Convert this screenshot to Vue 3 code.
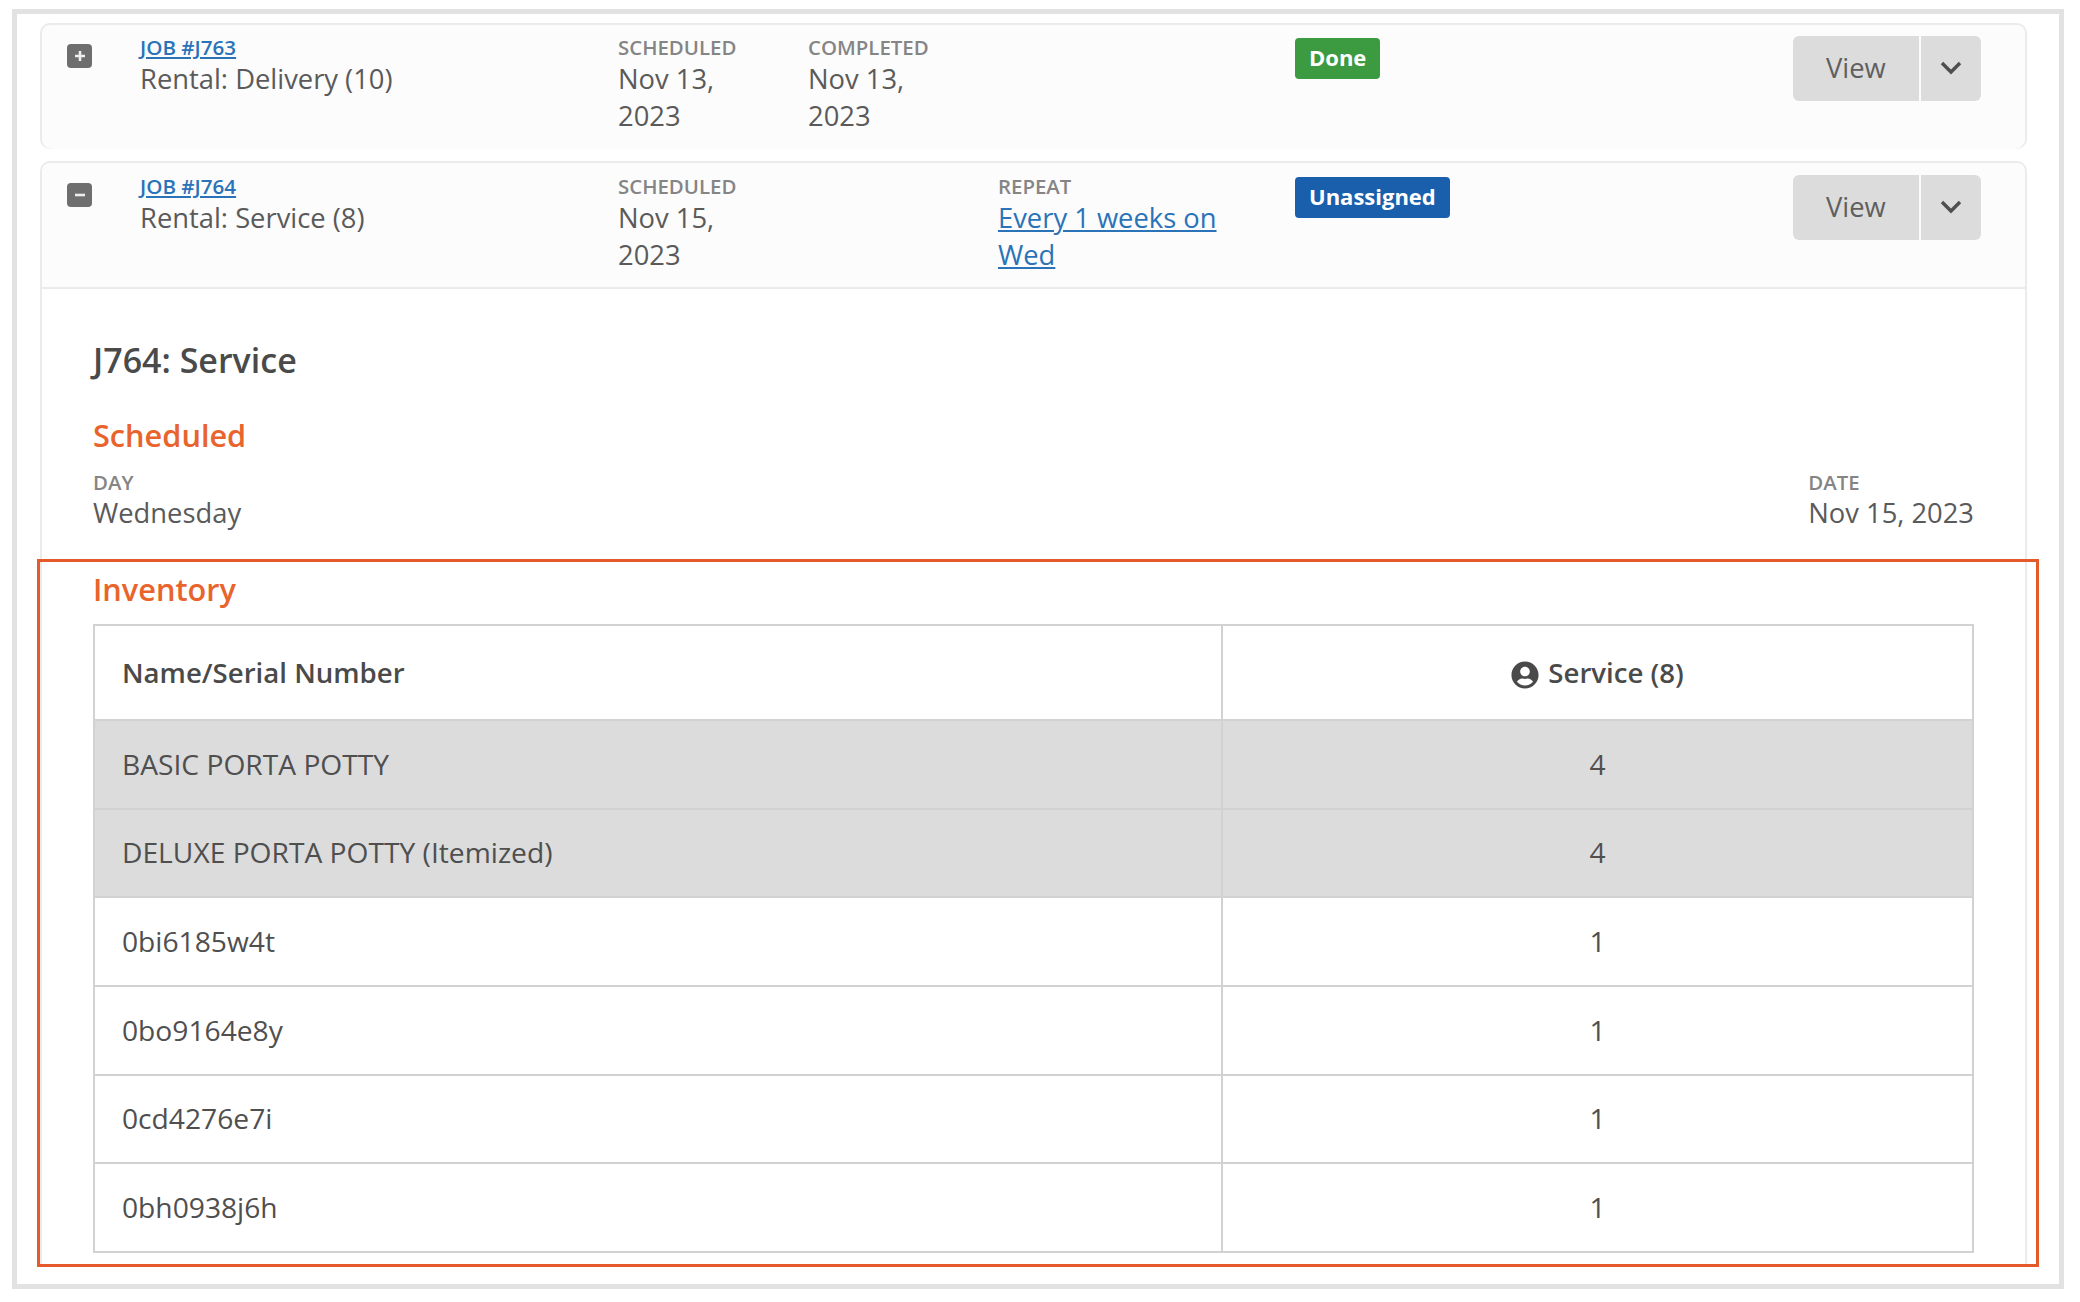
<template>
    <div class="frame">
        <div class="job-card">
            <div class="job-head">
                <button class="toggle">
                    <svg viewBox="0 0 24 24" width="24" height="24"><path d="M12 7v10M7 12h10" /></svg>
                </button>
                <div class="job-name">
                    <a class="job-link" href="#">JOB #J763</a>
                    <div class="value">Rental: Delivery (10)</div>
                </div>
                <div class="meta">
                    <div class="label">SCHEDULED</div>
                    <div class="value">Nov 13, 2023</div>
                </div>
                <div class="meta">
                    <div class="label">COMPLETED</div>
                    <div class="value">Nov 13, 2023</div>
                </div>
                <div class="meta"></div>
                <div><span class="badge done">Done</span></div>
                <div class="btn-group">
                    <button class="view-btn">View</button>
                    <button class="caret-btn">
                        <svg viewBox="0 0 24 16" width="24" height="16"><path d="M3 3l9 9 9-9" /></svg>
                    </button>
                </div>
            </div>
        </div>

        <div class="job-card open">
            <div class="job-head">
                <button class="toggle">
                    <svg viewBox="0 0 24 24" width="24" height="24"><path d="M7 12h10" /></svg>
                </button>
                <div class="job-name">
                    <a class="job-link" href="#">JOB #J764</a>
                    <div class="value">Rental: Service (8)</div>
                </div>
                <div class="meta">
                    <div class="label">SCHEDULED</div>
                    <div class="value">Nov 15, 2023</div>
                </div>
                <div class="meta"></div>
                <div class="meta">
                    <div class="label">REPEAT</div>
                    <a class="value repeat" href="#">Every 1 weeks on Wed</a>
                </div>
                <div><span class="badge unassigned">Unassigned</span></div>
                <div class="btn-group">
                    <button class="view-btn">View</button>
                    <button class="caret-btn">
                        <svg viewBox="0 0 24 16" width="24" height="16"><path d="M3 3l9 9 9-9" /></svg>
                    </button>
                </div>
            </div>

            <div class="job-body">
                <h2>J764: Service</h2>
                <h3 class="scheduled-title">Scheduled</h3>
                <div class="day-row">
                    <div>
                        <div class="label">DAY</div>
                        <div class="value">Wednesday</div>
                    </div>
                    <div>
                        <div class="label">DATE</div>
                        <div class="value">Nov 15, 2023</div>
                    </div>
                </div>

                <section class="inventory">
                    <h3>Inventory</h3>
                    <table>
                        <thead>
                            <tr>
                                <th class="name-col">Name/Serial Number</th>
                                <th>
                                    <svg class="user-icon" viewBox="0 0 512 512" width="28" height="28"><path d="M256 8C119 8 8 119 8 256s111 248 248 248 248-111 248-248S393 8 256 8zm0 96c48.6 0 88 39.4 88 88s-39.4 88-88 88-88-39.4-88-88 39.4-88 88-88zm0 344c-58.7 0-111.3-26.6-146.5-68.2 18.8-35.4 55.6-59.8 98.5-59.8 2.4 0 4.8.4 7.1 1.1 13 4.2 26.6 6.9 40.9 6.9 14.3 0 28-2.7 40.9-6.9 2.3-.7 4.7-1.1 7.1-1.1 42.9 0 79.7 24.4 98.5 59.8C367.3 421.4 314.7 448 256 448z" /></svg>
                                    Service (8)
                                </th>
                            </tr>
                        </thead>
                        <tbody>
                            <tr v-for="row in rows" :key="row.name" :class="{ group: row.group }">
                                <td class="name-col">{{ row.name }}</td>
                                <td>{{ row.qty }}</td>
                            </tr>
                        </tbody>
                    </table>
                </section>
            </div>
        </div>
    </div>
</template>

<script setup>
const rows = [
    { name: 'BASIC PORTA POTTY', qty: 4, group: true },
    { name: 'DELUXE PORTA POTTY (Itemized)', qty: 4, group: true },
    { name: '0bi6185w4t', qty: 1 },
    { name: '0bo9164e8y', qty: 1 },
    { name: '0cd4276e7i', qty: 1 },
    { name: '0bh0938j6h', qty: 1 }
]
</script>

<style>
body {
    background: #fff;
}
</style>

<style scoped>
.frame {
    box-sizing: border-box;
    width: 2052px;
    height: 1280px;
    margin: 9px 0 0 12px;
    padding: 9px 32px 0 23px;
    border: 5px solid #e2e2e2;
    overflow: hidden;
    background: #fff;
    font-family: "Open Sans", sans-serif;
    color: #555;
}

.job-card {
    box-sizing: border-box;
    height: 126px;
    margin-bottom: 12px;
    border: 2px solid #ebebeb;
    border-radius: 10px;
    background: #fcfcfc;
}

.job-card.open {
    height: auto;
    margin-bottom: 0;
    border-bottom: none;
    border-radius: 10px 10px 0 0;
    background: #fff;
}

.job-head {
    display: grid;
    grid-template-columns: 73px 478px 190px 190px 297px 498px 188px;
    box-sizing: border-box;
    height: 124px;
    padding: 10px 0 0 25px;
    background: #fcfcfc;
    border-radius: 10px;
}

.open .job-head {
    height: 126px;
    padding-top: 11px;
    border-bottom: 2px solid #ebebeb;
    border-radius: 10px 10px 0 0;
}

.toggle {
    width: 25px;
    height: 24px;
    margin-top: 9px;
    padding: 0;
    border: none;
    border-radius: 4px;
    background: #6e6e6e;
}

.toggle svg {
    display: block;
    margin: auto;
}

.toggle path {
    fill: none;
    stroke: #eee;
    stroke-width: 2.6;
}

.job-link {
    display: block;
    font-size: 20.6px;
    font-weight: 600;
    line-height: 25px;
    color: #2a73b8;
}

.label {
    font-size: 20.4px;
    font-weight: 600;
    line-height: 25px;
    color: #858585;
}

.value {
    font-size: 27.35px;
    line-height: 37px;
    color: #5a5a5a;
}

.job-name .value {
    white-space: nowrap;
}

.meta {
    padding-right: 40px;
}

.repeat {
    color: #2a73b8;
}

.badge {
    display: inline-block;
    margin-top: 3px;
    padding: 0 14px 2px;
    border-radius: 4px;
    font-size: 22px;
    font-weight: 700;
    line-height: 39px;
    color: #fff;
}

.done {
    background: #3c9a40;
}

.unassigned {
    background: #1a5fac;
}

.btn-group {
    display: flex;
    height: 65px;
    margin-top: 1px;
}

.btn-group button {
    border: none;
    background: #dcdcdc;
    padding: 0;
    font-family: inherit;
}

.view-btn {
    width: 127px;
    padding-bottom: 2px !important;
    border-radius: 6px 0 0 6px;
    font-size: 27.35px;
    color: #5f5f5f;
}

.caret-btn {
    width: 61px;
    margin-left: 2px;
    border-radius: 0 6px 6px 0;
}

.caret-btn svg {
    display: block;
    margin: -2px auto 0;
}

.caret-btn path {
    fill: none;
    stroke: #4f4f4f;
    stroke-width: 3.4;
}

.job-body {
    padding: 48px 51px 0 51px;
}

h2 {
    margin: 0;
    font-size: 34px;
    font-weight: 600;
    line-height: 46px;
    color: #4a4a4a;
}

h3 {
    margin: 0;
    font-size: 30.7px;
    font-weight: 600;
    line-height: 40px;
    color: #e8642c;
}

.scheduled-title {
    margin-top: 32px;
}

.day-row {
    display: flex;
    justify-content: space-between;
    margin-top: 15px;
}

.day-row .label {
    line-height: 24px;
}

.inventory {
    box-sizing: border-box;
    margin: 28px -65px 0 -56px;
    padding: 7px 61px 0 53px;
    height: 708px;
    border: 3px solid #e55a2b;
}

table {
    width: 1881px;
    height: 629px;
    margin-top: 15px;
    border-collapse: collapse;
    table-layout: fixed;
    font-size: 28.2px;
    color: #4f4f4f;
}

th,
td {
    border: 2px solid #d2d2d2;
    text-align: center;
    font-weight: 400;
    padding: 0 28px;
}

th {
    height: 91px;
    padding-bottom: 2px;
    font-size: 27.6px;
    font-weight: 600;
    color: #4a4a4a;
}

td {
    padding-bottom: 1px;
}

.name-col {
    box-sizing: border-box;
    width: 1128px;
    padding-left: 27px;
    text-align: left;
}

.group td {
    background: #dcdcdc;
}

.user-icon {
    vertical-align: -6px;
    margin-right: 2px;
    fill: #4a4a4a;
}
</style>
